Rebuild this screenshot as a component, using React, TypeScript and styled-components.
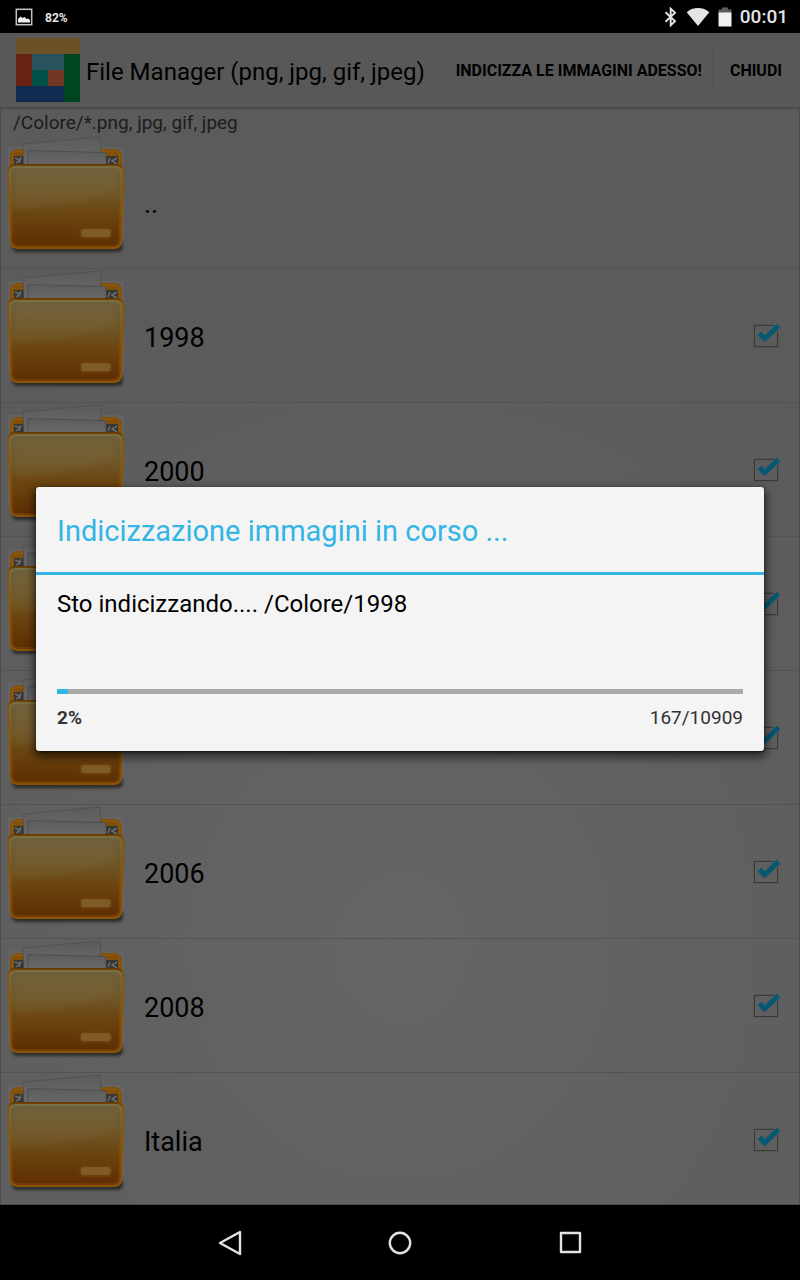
import React from "react";
import styled, { createGlobalStyle } from "styled-components";

const GlobalStyle = createGlobalStyle`
  *, *::before, *::after { box-sizing: border-box; }
  body {
    margin: 0;
    background: #000;
    font-family: Roboto, "Liberation Sans", sans-serif;
    color: #000;
  }
  button { font: inherit; color: inherit; border: 0; background: none; padding: 0; cursor: pointer; }
`;

const Screen = styled.div`
  display: flex;
  flex-direction: column;
  height: 100vh;
  overflow: hidden;
`;

const StatusBar = styled.header`
  display: flex;
  align-items: center;
  justify-content: space-between;
  flex: none;
  height: 33px;
  padding: 0 12px 0 15px;
  background: #000;
  color: #e4e4e4;
`;

const StatusGroup = styled.div<{ $gap: number }>`
  display: flex;
  align-items: center;
  gap: ${(p) => p.$gap}px;
`;

const BatteryLevel = styled.span`
  font-size: 12px;
  line-height: 16px;
  font-weight: 700;
  padding-top: 2px;
`;

const Clock = styled.time`
  font-size: 19px;
  line-height: 24px;
  font-weight: 500;
`;

const Window = styled.main`
  position: relative;
  display: flex;
  flex-direction: column;
  flex: 1;
  min-height: 0;
  background: radial-gradient(ellipse 80% 60% at 50% 78%, #656565, #5b5b5b);
`;

const AppBar = styled.div`
  display: flex;
  align-items: center;
  flex: none;
  height: 75px;
  padding: 0 2px 0 16px;
  background: #585858;
  border-bottom: 1px solid #484848;
  box-shadow: 0 1px 2px rgba(0, 0, 0, 0.2);
`;

const AppTitle = styled.h1`
  flex: 1;
  min-width: 0;
  margin: 0 0 0 6px;
  padding-top: 4px;
  font-size: 24px;
  line-height: 28px;
  font-weight: 400;
  white-space: nowrap;
  overflow: hidden;
`;

const MenuButton = styled.button<{ $divided?: boolean }>`
  flex: none;
  height: 44px;
  padding: 2px ${(p) => (p.$divided ? 16 : 11)}px 0;
  border-left: ${(p) => (p.$divided ? "1px solid #4e4e4e" : "0")};
  font-size: 16px;
  line-height: 20px;
  font-weight: 700;
  text-transform: uppercase;
`;

const Browser = styled.section`
  flex: 1;
  min-height: 0;
  overflow: hidden;
  border: 1px solid #4c4c4c;
  border-top: 0;
`;

const Path = styled.p`
  margin: 0;
  padding: 3px 12px 0;
  height: 27px;
  font-size: 19px;
  line-height: 24px;
  color: #1c1c1c;
`;

const FolderList = styled.ul`
  list-style: none;
  margin: 0;
  padding: 0;
`;

const FolderRow = styled.li`
  display: flex;
  align-items: center;
  height: 134px;
  padding-right: 16px;
  border-bottom: 1px solid #535353;
`;

const FolderName = styled.label`
  flex: 1;
  padding: 4px 0 0 11px;
  font-size: 27px;
  line-height: 32px;
`;

const Tick = styled.span`
  display: grid;
  width: 32px;
  height: 32px;

  > * {
    grid-area: 1 / 1;
  }

  > input {
    appearance: none;
    align-self: center;
    margin: 0 0 0 3px;
    width: 24px;
    height: 22px;
    border: 1px solid #3a3a3a;
    box-shadow: 0 0 1px #3a3a3a;
  }

  > svg {
    pointer-events: none;
  }
`;

const Overlay = styled.div`
  position: absolute;
  inset: 0;
  display: flex;
  align-items: center;
  padding: 0 36px;
`;

const Dialog = styled.div`
  flex: 1;
  background: #f4f4f4;
  border-radius: 3px;
  box-shadow: 0 4px 10px 2px rgba(0, 0, 0, 0.6), 0 1px 2px rgba(0, 0, 0, 0.6);
`;

const DialogTitle = styled.h2`
  margin: 0;
  padding: 26px 21px 23px;
  border-bottom: 3px solid #33b5e5;
  font-size: 29px;
  line-height: 36px;
  font-weight: 400;
  color: #33b5e5;
`;

const DialogBody = styled.div`
  padding: 14px 21px 20px;
`;

const Message = styled.p`
  margin: 0;
  height: 100px;
  font-size: 24px;
  line-height: 30px;
`;

const Bar = styled.progress`
  display: block;
  appearance: none;
  width: 100%;
  height: 5px;
  border: 0;
  background: #aaa;

  &::-webkit-progress-bar {
    background: #aaa;
  }
  &::-webkit-progress-value {
    background: #33b5e5;
  }
`;

const Figures = styled.div`
  display: flex;
  justify-content: space-between;
  margin-top: 11px;
  font-size: 19px;
  line-height: 26px;
  color: #333;
`;

const NavBar = styled.nav`
  display: flex;
  justify-content: center;
  align-items: center;
  flex: none;
  gap: 122px;
  height: 75px;
  background: #000;
`;

const NavButton = styled.button`
  display: grid;
  place-items: center;
  width: 48px;
  height: 48px;
`;

const ArtDefs = styled.svg`
  position: absolute;
  width: 0;
  height: 0;
`;

const PictureIcon = () => (
  <svg width="18" height="18" viewBox="0 0 18 18" aria-hidden="true">
    <rect x="1.3" y="1.3" width="15.4" height="15.4" fill="none" stroke="#c4c4c4" strokeWidth="1.5" />
    <path d="M3 14.5V11l2.5-2.5 2 1.5 2-1 2 2 1.5-.5 2 1.5v2.5z" fill="#eee" />
  </svg>
);

const BluetoothIcon = () => (
  <svg width="14" height="20" viewBox="0 0 14 20" fill="none" stroke="#e4e4e4" strokeWidth="1.9" aria-hidden="true">
    <path d="M1.5 5.3l9.5 9-4.3 4V1.7l4.3 4-9.5 9" />
  </svg>
);

const WifiIcon = () => (
  <svg width="24" height="20" viewBox="0 0 24 20" aria-hidden="true">
    <path d="M12 19L.7 5.2C3.6 2.6 7.5 1 12 1s8.4 1.6 11.3 4.2z" fill="#e4e4e4" />
  </svg>
);

const BatteryIcon = () => (
  <svg width="14" height="20" viewBox="0 0 14 20" aria-hidden="true">
    <path d="M.5 2.5H4V.5h6v2h3.5V6H.5z" fill="#5c5c5c" />
    <path d="M.5 5.5h13v14H.5z" fill="#f0f0f0" />
  </svg>
);

const AppLogo = () => (
  <svg width="64" height="64" viewBox="0 0 64 64" shapeRendering="crispEdges" aria-hidden="true">
    <rect width="64" height="16" fill="#6b5125" />
    <rect y="16" width="16" height="32" fill="#682213" />
    <rect x="16" y="16" width="32" height="16" fill="#28525d" />
    <rect x="16" y="32" width="16" height="16" fill="#005249" />
    <rect x="32" y="32" width="16" height="16" fill="#6f3724" />
    <rect x="48" y="16" width="16" height="48" fill="#004521" />
    <rect y="48" width="48" height="16" fill="#102c50" />
  </svg>
);

const FolderArtDefs = () => (
  <ArtDefs aria-hidden="true">
    <defs>
      <linearGradient id="sheet" x1="0" y1="0" x2="0" y2="1">
        <stop offset="0" stopColor="#5c5c5c" />
        <stop offset="1" stopColor="#6a6a6a" />
      </linearGradient>
      <linearGradient id="front" x1="0" y1="0" x2="0" y2="1">
        <stop offset="0" stopColor="#643800" />
        <stop offset=".06" stopColor="#8a5509" />
        <stop offset="1" stopColor="#8c5304" />
      </linearGradient>
      <linearGradient id="rim" x1="0" y1="0" x2="0" y2="1">
        <stop offset="0" stopColor="#777044" />
        <stop offset=".3" stopColor="#74602a" />
        <stop offset=".6" stopColor="#7f4e0b" />
        <stop offset="1" stopColor="#703c02" />
      </linearGradient>
      <linearGradient id="body" x1="0" y1="0" x2="0" y2="1">
        <stop offset="0" stopColor="#6f603c" />
        <stop offset=".35" stopColor="#6f5526" />
        <stop offset=".6" stopColor="#6b4510" />
        <stop offset="1" stopColor="#5e2e02" />
      </linearGradient>
      <filter id="soft" x="-10%" y="-50%" width="120%" height="200%">
        <feGaussianBlur stdDeviation="1.5" />
      </filter>
      <filter id="haze" x="-10%" y="-20%" width="120%" height="140%">
        <feGaussianBlur stdDeviation="3" />
      </filter>
      <symbol id="folder" viewBox="1 1 132 133">
        <path d="M8 13h116v90H8z" fill="#686868" opacity=".6" />
        <rect x="12" y="107" width="111" height="11" rx="5" fill="#2c2c2c" filter="url(#soft)" />
        <rect x="10" y="15" width="112" height="40" rx="8" fill="#824f06" />
        <rect x="12" y="17" width="108" height="36" rx="6" fill="none" stroke="#8e6019" strokeWidth="1" />
        <path d="M14 22h10v10H14zM106 22h12v10h-12z" fill="#363636" />
        <path d="M15 24l5 2-4 3M21 23l-2 6M117 24l-5 3 5 3M110 24l-2 5" stroke="#6c6c6c" strokeWidth="1.5" fill="none" />
        <path d="M23 10L99 3q1.5 0 1.5 1.5V33H24z" fill="url(#sheet)" stroke="#4e4e4e" strokeWidth=".7" />
        <path d="M28 16.5L105 18.5q1 0 1 1V33H28z" fill="url(#sheet)" stroke="#4a4a4a" strokeWidth=".8" />
        <path d="M14 30H117Q125 30 124.5 41L122 108Q121.5 115 114 115H18Q10.5 115 10 108L7.5 41Q7 30 14 30z" fill="url(#front)" />
        <path d="M15 33H116Q122 33 121.500 42L119.500 106Q119 112 113 112H18Q12.500 112 12 106L10 42Q9.500 33 15 33z" fill="url(#body)" stroke="url(#rim)" strokeWidth="2" />
        <path d="M14 59Q14 40 22 39H109Q116 40 116 59Q109 57 97 63Q60 73 14 75z" fill="#85794f" opacity=".18" filter="url(#haze)" />
        <rect x="80" y="94" width="31.500" height="10" rx="4" fill="#7f5c26" stroke="#6a3f0c" strokeWidth="2" />
      </symbol>
    </defs>
  </ArtDefs>
);

const FolderArt = () => (
  <svg width="132" height="133" aria-hidden="true">
    <use href="#folder" width="132" height="133" />
  </svg>
);

const TickMark = () => (
  <svg width="32" height="32" viewBox="0 0 32 32" fill="none" aria-hidden="true">
    <path d="M8.500 14l5 5L27 6" stroke="#5c5c5c" strokeWidth="7" />
    <path d="M8.500 13.500l5.200 5.200L27.500 5.500" stroke="#065873" strokeWidth="5" />
  </svg>
);

// Folders without a name carry only their tick box.
const folders: { id: string; name?: string; parent?: boolean }[] = [
  { id: "up", name: "..", parent: true },
  { id: "f1", name: "1998" },
  { id: "f2", name: "2000" },
  { id: "f3" },
  { id: "f4" },
  { id: "f5", name: "2006" },
  { id: "f6", name: "2008" },
  { id: "f7", name: "Italia" },
];

export default function App() {
  return (
    <Screen>
      <GlobalStyle />
      <FolderArtDefs />
      <StatusBar>
        <StatusGroup $gap={12}>
          <PictureIcon />
          <BatteryLevel>82%</BatteryLevel>
        </StatusGroup>
        <StatusGroup $gap={8}>
          <BluetoothIcon />
          <WifiIcon />
          <BatteryIcon />
          <Clock>00:01</Clock>
        </StatusGroup>
      </StatusBar>

      <Window>
        <AppBar>
          <AppLogo />
          <AppTitle>File Manager (png, jpg, gif, jpeg)</AppTitle>
          <MenuButton>Indicizza le immagini adesso!</MenuButton>
          <MenuButton $divided>Chiudi</MenuButton>
        </AppBar>
        <Browser>
          <Path>/Colore/*.png, jpg, gif, jpeg</Path>
          <FolderList>
            {folders.map((f) => (
              <FolderRow key={f.id}>
                <FolderArt />
                <FolderName htmlFor={f.parent ? undefined : f.id}>{f.name}</FolderName>
                {!f.parent && (
                  <Tick>
                    <input id={f.id} type="checkbox" defaultChecked aria-label={f.name ?? "Cartella"} />
                    <TickMark />
                  </Tick>
                )}
              </FolderRow>
            ))}
          </FolderList>
        </Browser>

        <Overlay>
          <Dialog role="dialog" aria-modal="true" aria-labelledby="dialog-title">
            <DialogTitle id="dialog-title">Indicizzazione immagini in corso ...</DialogTitle>
            <DialogBody>
              <Message id="message">Sto indicizzando.... /Colore/1998</Message>
              <Bar value={167} max={10909} aria-labelledby="message" />
              <Figures>
                <strong>2%</strong>
                <span>167/10909</span>
              </Figures>
            </DialogBody>
          </Dialog>
        </Overlay>
      </Window>

      <NavBar>
        <NavButton aria-label="Indietro">
          <svg width="26" height="28" viewBox="0 0 26 28" fill="none" stroke="#e2e2e2" strokeWidth="2.4" strokeLinejoin="round">
            <path d="M3 14L23 3v22z" />
          </svg>
        </NavButton>
        <NavButton aria-label="Home">
          <svg width="26" height="26" viewBox="0 0 26 26" fill="none" stroke="#e2e2e2" strokeWidth="2.4">
            <circle cx="13" cy="13" r="10.2" />
          </svg>
        </NavButton>
        <NavButton aria-label="Recenti">
          <svg width="24" height="24" viewBox="0 0 24 24" fill="none" stroke="#e2e2e2" strokeWidth="2.4" strokeLinejoin="round">
            <rect x="3" y="2" width="19" height="19" />
          </svg>
        </NavButton>
      </NavBar>
    </Screen>
  );
}
